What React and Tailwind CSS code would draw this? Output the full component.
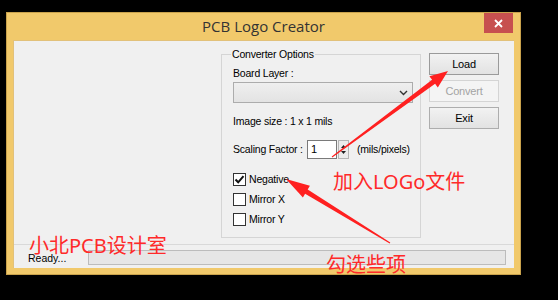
import React from 'react';

const ui = { fontFamily: '"Liberation Sans", Arial, sans-serif' };
const cjk = { fontFamily: '"Noto Sans", "Noto Sans CJK SC", sans-serif' };

function Check({ checked, label }) {
  return (
    <div className="flex h-[20px] items-center">
      <div className="flex h-[13px] w-[13px] items-center justify-center border border-[#333333] bg-white">
        {checked && (
          <svg width="11" height="11" viewBox="0 0 11 11">
            <path d="M1.5 5.5 L4.2 8.3 L9.5 2.2" fill="none" stroke="#111" strokeWidth="2" />
          </svg>
        )}
      </div>
      <span className="ml-[3px] whitespace-nowrap text-[10.5px] leading-[13px] tracking-[-0.2px] text-black">{label}</span>
    </div>
  );
}

function Button({ children, disabled, strong }) {
  return (
    <div
      className={
        'flex h-[22px] w-[70px] items-center justify-center border text-[11px] ' +
        (disabled
          ? 'border-[#d4d4d4] bg-[#f4f4f4] text-[#a3a3a3]'
          : strong
          ? 'border-[#9a9a9a] bg-gradient-to-b from-[#f2f2f2] to-[#e2e2e2] text-black'
          : 'border-[#adadad] bg-gradient-to-b from-[#f2f2f2] to-[#e2e2e2] text-black')
      }
    >
      {children}
    </div>
  );
}

export default function App() {
  return (
    <div className="relative h-[300px] w-[558px] overflow-hidden bg-black pl-[6px] pt-[12px]" style={ui}>
      {/* window */}
      <div className="flex h-[263px] w-[515px] flex-col border border-[#c9a24c] bg-[#f1c96b] px-[6px] pb-[6px]">
        {/* title bar */}
        <div className="flex h-[27px] items-center">
          <div className="flex-1 pl-[30px] text-center text-[15px] text-[#333333]" style={{ fontFamily: '"Open Sans", "Noto Sans", sans-serif' }}>
            PCB Logo Creator
          </div>
          <div className="mb-[7px] flex h-[20px] w-[29px] items-center justify-center bg-[#c7504f]">
            <svg width="9" height="9" viewBox="0 0 9 9">
              <path d="M1 1 L8 8 M8 1 L1 8" stroke="white" strokeWidth="1.8" />
            </svg>
          </div>
          <div className="w-[1px]" />
        </div>

        {/* client area */}
        <div className="flex flex-1 flex-col border-l border-t border-[#e2c17a] bg-[#f0f0f0]">
          <div className="flex h-[203px] items-start pl-[207px] text-[10.5px] tracking-[-0.2px]">
            {/* group box */}
            <div className="mt-[13px] flex w-[200px] flex-col border border-[#d5d5d5] pb-[8px] pl-[11px] pr-[6px]">
              <div className="-ml-[2px] -mt-[7px] h-[13px] w-fit whitespace-nowrap bg-[#f0f0f0] px-[1px] leading-[13px] text-black">
                Converter Options
              </div>
              <div className="mt-[6px] h-[13px] leading-[13px]">Board Layer :</div>
              <div className="mt-[2px] flex h-[21px] w-[180px] items-center justify-end border border-[#acacac] bg-gradient-to-b from-[#efefef] to-[#e3e3e3] pr-[4px]">
                <svg width="9" height="6" viewBox="0 0 9 6">
                  <path d="M1 1 L4.5 4.5 L8 1" fill="none" stroke="#333" strokeWidth="1.4" />
                </svg>
              </div>
              <div className="mt-[12px] h-[13px] whitespace-nowrap leading-[13px]">Image size : 1 x 1 mils</div>
              <div className="mt-[12px] flex h-[19px] items-center">
                <span className="w-[74px] whitespace-nowrap leading-[13px]">Scaling Factor :</span>
                <div className="flex h-[19px] w-[30px] items-center border border-[#7a7a7a] bg-white pl-[3px] text-[11px]">1</div>
                <div className="ml-[1px] flex h-[19px] w-[11px] flex-col items-center justify-center gap-[3px] border border-[#b5b5b5] bg-[#ececec]">
                  <svg width="5" height="3" viewBox="0 0 5 3"><path d="M0 3 L2.5 0 L5 3 Z" fill="#222" /></svg>
                  <svg width="5" height="3" viewBox="0 0 5 3"><path d="M0 0 L2.5 3 L5 0 Z" fill="#222" /></svg>
                </div>
                <span className="ml-[8px] whitespace-nowrap leading-[13px]">(mils/pixels)</span>
              </div>
              <div className="mt-[10px] flex flex-col">
                <Check checked label="Negative" />
                <Check label="Mirror X" />
                <Check label="Mirror Y" />
              </div>
            </div>

            {/* buttons */}
            <div className="ml-[8px] mt-[12px] flex flex-col">
              <Button strong>Load</Button>
              <div className="mt-[5px]"><Button disabled>Convert</Button></div>
              <div className="mt-[5px]"><Button>Exit</Button></div>
            </div>
          </div>

          {/* status bar */}
          <div className="h-[1px] bg-[#d9d9d9]" />
          <div className="flex flex-1 items-start pl-[14px] pr-[8px] pt-[5px]">
            <span className="w-[60px] whitespace-nowrap pt-[2px] text-[10.5px] leading-[13px] text-black">Ready...</span>
            <div className="h-[15px] flex-1 border border-[#bcbcbc] bg-[#e6e6e6]" />
          </div>
        </div>
      </div>

      {/* annotations */}
      <svg className="pointer-events-none absolute left-0 top-0" width="558" height="300" viewBox="0 0 558 300">
        <polygon
          fill="#ff2020"
          points="332.3,157.4 435.1,83.8 437.8,87.4 448,71 429.4,76.2 432.1,79.8 331.7,156.6"
        />
        <polygon
          fill="#ff2020"
          points="390.3,242.6 307.7,189.5 309.9,185.8 286,179 302.9,197.4 305.1,193.7 389.7,243.4"
        />
      </svg>
      <span className="absolute left-[29px] top-[234px] text-[20px] leading-[24px] text-[#ff2a2a]" style={cjk}>
        小北PCB设计室
      </span>
      <span className="absolute left-[333px] top-[170px] text-[20px] leading-[24px] text-[#ff2a2a]" style={cjk}>
        加入LOGo文件
      </span>
      <span className="absolute left-[326px] top-[253px] text-[20px] leading-[24px] text-[#ff2a2a]" style={cjk}>
        勾选些项
      </span>
    </div>
  );
}
